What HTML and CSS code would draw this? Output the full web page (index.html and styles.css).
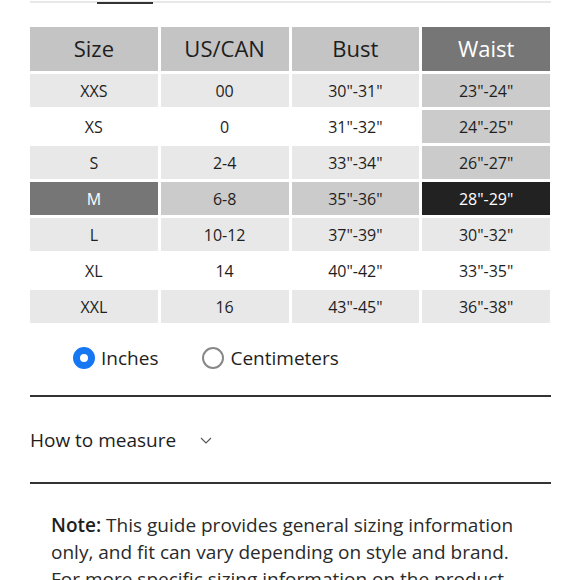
FILE: index.html
```html
<!DOCTYPE html>
<html>
<head>
<meta charset="utf-8">
<link rel="stylesheet" href="styles.css">
</head>
<body>
<div class="page">
  <div class="tabs"><span class="tab-active"></span></div>
  <div class="chart">
    <div class="cell head">Size</div>
    <div class="cell head">US/CAN</div>
    <div class="cell head">Bust</div>
    <div class="cell head dark">Waist</div>

    <div class="cell light">XXS</div>
    <div class="cell light">00</div>
    <div class="cell light">30"-31"</div>
    <div class="cell mid">23"-24"</div>

    <div class="cell">XS</div>
    <div class="cell">0</div>
    <div class="cell">31"-32"</div>
    <div class="cell mid">24"-25"</div>

    <div class="cell light">S</div>
    <div class="cell light">2-4</div>
    <div class="cell light">33"-34"</div>
    <div class="cell mid">26"-27"</div>

    <div class="cell dark">M</div>
    <div class="cell mid">6-8</div>
    <div class="cell mid">35"-36"</div>
    <div class="cell black">28"-29"</div>

    <div class="cell light">L</div>
    <div class="cell light">10-12</div>
    <div class="cell light">37"-39"</div>
    <div class="cell light">30"-32"</div>

    <div class="cell">XL</div>
    <div class="cell">14</div>
    <div class="cell">40"-42"</div>
    <div class="cell">33"-35"</div>

    <div class="cell light">XXL</div>
    <div class="cell light">16</div>
    <div class="cell light">43"-45"</div>
    <div class="cell light">36"-38"</div>
  </div>

  <div class="units">
    <label class="unit"><span class="radio on"></span>Inches</label>
    <label class="unit"><span class="radio"></span>Centimeters</label>
  </div>

  <div class="measure">
    <span>How to measure</span>
    <svg class="chev" width="12" height="7" viewBox="0 0 12 7"><path d="M1 1 L6 6 L11 1" fill="none" stroke="#555" stroke-width="1.1"/></svg>
  </div>

  <p class="note"><b>Note:</b> This guide provides general sizing information only, and fit can vary depending on style and brand. For more specific sizing information on the product page.</p>
</div>
</body>
</html>
```
FILE: styles.css
```css
html, body {
  margin: 0;
  padding: 0;
  background: #fff;
}
body {
  font-family: "Open Sans", "Noto Sans", sans-serif;
  color: #222;
  overflow: hidden;
  height: 580px;
}
.page {
  width: 521px;
  padding-left: 30px;
}
.tabs {
  height: 2px;
  margin-top: 1px;
  background: #e8e8e8;
  position: relative;
}
.tab-active {
  position: absolute;
  left: 67px;
  top: 1px;
  width: 56px;
  height: 2px;
  background: #333;
}
.chart {
  width: 520px;
  margin-top: 24px;
  display: grid;
  grid-template-columns: repeat(4, 1fr);
  grid-auto-rows: 33px;
  grid-template-rows: 44px;
  gap: 3px 3px;
}
.cell {
  display: flex;
  align-items: center;
  justify-content: center;
  font-size: 16px;
  color: #1e1e1e;
  background: #fff;
}
.head {
  font-size: 22px;
  padding-bottom: 3px;
  background: #c4c4c4;
}
.light { background: #e8e8e8; }
.mid { background: #cbcbcb; }
.dark { background: #767676; color: #fff; }
.black { background: #222; color: #fff; }

.units {
  display: flex;
  align-items: center;
  height: 24px;
  margin-top: 23px;
  padding-left: 43px;
  gap: 44px;
  font-size: 19px;
}
.unit {
  display: flex;
  align-items: center;
  gap: 6px;
  color: #1e1e1e;
}
.radio {
  width: 18px;
  height: 18px;
  border-radius: 50%;
  border: 2px solid #888;
  box-sizing: content-box;
}
.radio.on {
  width: 8px;
  height: 8px;
  border: 7px solid #1677f2;
}
.measure {
  margin-top: 25px;
  border-top: 2px solid #333;
  border-bottom: 2px solid #333;
  height: 85px;
  display: flex;
  align-items: center;
  gap: 24px;
  font-size: 19px;
  color: #1e1e1e;
}
.chev { margin-top: 1px; }
.note {
  margin: 28px 10px 0 21px;
  font-size: 19px;
  line-height: 27px;
  color: #2a2a2a;
}
.note b { font-weight: 600; color: #1e1e1e; }
```
